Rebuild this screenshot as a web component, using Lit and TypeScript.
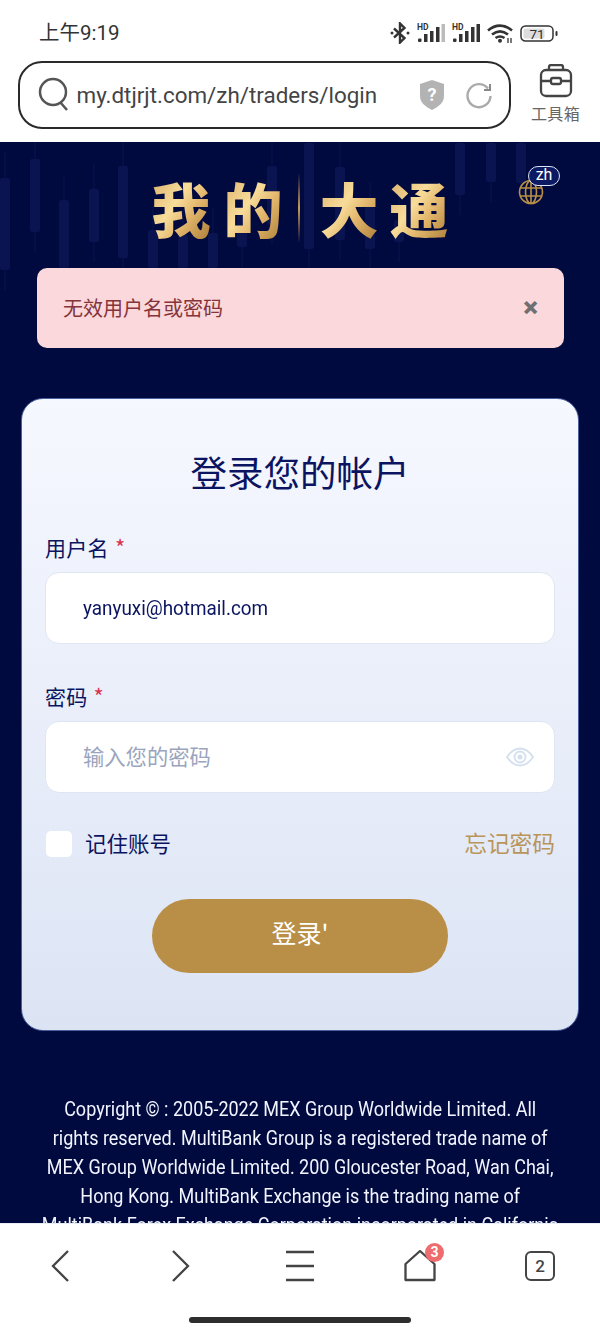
import { LitElement, html, css, svg, unsafeCSS } from "lit";
import { customElement } from "lit/decorators.js";

const CJK = unsafeCSS(`"Noto Sans CJK SC", "Noto Sans", sans-serif`);

// x centre, body top, body bottom (page coordinates of the decorative chart)
const candles: [number, number, number][] = [
  [5, 178, 270], [35, 159, 232], [64, 200, 268], [94, 189, 242], [123, 166, 258],
  [153, 230, 268], [183, 235, 268], [213, 233, 268], [242, 215, 247], [272, 166, 225],
  [309, 143, 249], [340, 167, 240], [370, 207, 249], [399, 220, 242],
  [460, 143, 195], [491, 143, 182], [521, 143, 183],
];
const TOP = 142;

@customElement("app-root")
export class AppRoot extends LitElement {
  static styles = css`
    :host { display: block; width: 600px; height: 1333px; overflow: hidden; font-family: ${CJK}; background: #fff; }
    .page { display: flex; flex-direction: column; height: 1333px; }
    .status { height: 58px; flex: none; display: flex; align-items: center; justify-content: space-between; padding: 8px 42px 0 39px; box-sizing: border-box; color: #333; }
    .time { font-size: 20.5px; font-family: Roboto, ${CJK}; line-height: 34px; }
    .status-icons { display: flex; align-items: center; gap: 7px; }
    .toolbar { height: 84px; flex: none; display: flex; padding: 3px 0 0 18px; box-sizing: border-box; }
    .pill { width: 493px; height: 68px; box-sizing: border-box; border: 2.5px solid #2a2a2a; border-radius: 24px; display: flex; align-items: center; padding: 0 17px 0 17.5px; }
    .url { font: 22.4px Roboto, sans-serif; color: #444; margin-left: 7px; flex: 1; white-space: nowrap; }
    .shield { margin-right: 21px; display: block; }
    .tool { flex: 1; display: flex; flex-direction: column; align-items: center; padding-top: 3px; }
    .tool span { font-size: 16px; color: #666; line-height: 22px; margin-top: 4px; letter-spacing: 0.3px; }
    .main { flex: 1; min-height: 0; overflow: hidden; background: #010a3e; position: relative; display: flex; flex-direction: column; }
    .candles { position: absolute; left: 0; top: 0; }
    .logo { height: 126px; flex: none; position: relative; display: flex; align-items: center; justify-content: center; }
    .logo-text { font-size: 59px; line-height: 70px; font-weight: 900; margin-top: 5px; display: flex; align-items: center; }
    .logo-text span { background: linear-gradient(125deg, #d9ae68 0%, #f8dc9a 42%, #e4b96f 62%, #a97a34 100%); -webkit-background-clip: text; background-clip: text; color: transparent; }
    .logo-text .g1 { margin-right: 13px; }
    .logo-text .g3 { margin-right: 11px; }
    .logo-sep { width: 2px; height: 70px; margin: 0 20px 0 15px; background: linear-gradient(#010a3e, #c89a58, #010a3e); }
    .globe { position: absolute; left: 518px; top: 37px; }
    .badge { position: absolute; left: 528px; top: 24px; width: 32px; height: 20px; box-sizing: border-box; border: 1.5px solid #dfe4f5; border-radius: 10px; background: #0c1a63; color: #fff; font: 16px/16px Roboto, sans-serif; text-align: center; }
    .alert { flex: none; position: relative; margin: 0 36px 0 37px; height: 80px; box-sizing: border-box; border-radius: 10px; background: #fbd8db; color: #85343a; display: flex; align-items: center; justify-content: space-between; padding: 0 26px 2px; font-size: 20px; }
    .alert b { font: 900 28px Roboto, sans-serif; color: #6f6f72; }
    .card { flex: none; position: relative; margin: 50px 21px 0; height: 633px; box-sizing: border-box; border: 1px solid #4a5f9e; border-radius: 22px; background: linear-gradient(#f6f8ff, #dce4f4); padding: 47px 23px 0; color: #0b1460; }
    .title { font-size: 36.5px; line-height: 52px; height: 53px; text-align: center; }
    label { display: block; font-size: 21px; line-height: 27px; height: 30px; margin-top: 34px; letter-spacing: 0.3px; }
    label + .input { margin-top: 9px; }
    label i { color: #d8344c; font-style: normal; font-size: 22px; margin-left: 1px; }
    .input + label { margin-top: 38px; }
    .input { height: 72px; box-sizing: border-box; background: #fff; border: 1px solid #dfe6f3; border-radius: 14px; display: flex; align-items: center; justify-content: space-between; padding: 0 20px 0 37px; font-size: 21.3px; }
    .email { display: inline-block; transform: scaleX(0.92); transform-origin: left center; font-family: Roboto, sans-serif; font-size: 20.5px; color: #0b1460; }
    .ph { color: #9aa5bd; margin-bottom: 4px; }
    .row { display: flex; align-items: center; justify-content: space-between; height: 30px; margin-top: 36px; }
    .remember { display: flex; align-items: center; gap: 13px; font-size: 21.5px; line-height: 28px; }
    .remember span:last-child { margin-top: -3px; }
    .check { width: 26px; height: 26px; background: #fff; border-radius: 5px; margin-left: 1px; }
    .forgot { font-size: 22.7px; color: #b9955a; margin-top: -3px; }
    .btn { display: block; margin: 40px auto 0; width: 296px; height: 74px; padding: 0 0 9px; border: 0; border-radius: 37px; background: #b98f47; color: #fff; font: 25px ${CJK}; }
    .copy { flex: none; position: relative; width: 667px; box-sizing: border-box; margin: 64px 0 0; padding: 0 44.6px; transform: scaleX(0.9); transform-origin: left top; text-align: center; color: #f2f4ff; font: 20px/29px Roboto, sans-serif; }
    .nav { height: 110px; flex: none; background: #fff; border-top: 1px solid #e8ecf4; box-sizing: border-box; display: flex; flex-direction: column; position: relative; }
    .nav-icons { height: 83px; display: grid; grid-template-columns: repeat(5, 120px); justify-items: center; align-items: start; padding-top: 26px; box-sizing: border-box; }
    .nav-home { position: relative; width: 32px; height: 32px; }
    .dot { position: absolute; left: 21px; top: -7px; width: 19px; height: 19px; border-radius: 50%; background: #ee6b6e; color: #fff; font: bold 14px/19px Roboto, sans-serif; text-align: center; }
    .tabs { width: 30px; height: 30px; box-sizing: border-box; border: 2px solid #444; border-radius: 6px; color: #444; font: 500 17px/26px Roboto, sans-serif; text-align: center; margin-top: 1px; }
    .handle-wrap { flex: 1; display: flex; justify-content: center; padding-top: 10px; }
    .handle { width: 222px; height: 6px; border-radius: 3px; background: #2e2e2e; }
  `;

  private signal(dimLast: boolean) {
    return html`<svg width="28" height="20" viewBox="0 0 28 20">
      <text x="0" y="7" font-family="Roboto, sans-serif" font-size="8.5" font-weight="700" fill="#333">HD</text>
      <rect x="1" y="15.500" width="3.500" height="3.500" rx="1" fill="#333"/><rect x="7" y="11" width="3.500" height="8" fill="#333"/>
      <rect x="13" y="8" width="3.500" height="11" fill="#333"/><rect x="19" y="4" width="3.500" height="15" fill="#333"/>
      <rect x="24.500" y="1" width="3.500" height="18" fill="${dimLast ? "#bbb" : "#333"}"/>
    </svg>`;
  }

  render() {
    return html`<div class="page">
      <div class="status">
        <div class="time">上午9:19</div>
        <div class="status-icons">
          <svg width="20" height="22" viewBox="0 0 20 22" fill="none" stroke="#333" stroke-width="2.400"><path d="M4 6.500l10.500 9.500-4.500 4.500V1.500L14.500 6 4 15.500"/><circle cx="2" cy="11" r="1.500" fill="#333" stroke="none"/><circle cx="18" cy="11" r="1.500" fill="#333" stroke="none"/></svg>
          ${this.signal(true)}${this.signal(false)}
          <svg width="26" height="19" viewBox="0 0 26 19" fill="none" stroke="#333" stroke-width="2.600"><path d="M1 6.500c7.500-6.500 16.500-6.500 24 0M5 10.500c5-4 11-4 16 0M8.500 14c3-2 6-2 9 0"/><circle cx="13" cy="16.800" r="2" fill="#333" stroke="none"/><path d="M21 14v5M24 14v5" stroke-width="1.300"/></svg>
          <svg width="38" height="17" viewBox="0 0 38 17"><rect x="1" y="1" width="32" height="15" rx="4.500" fill="#fff" stroke="#333" stroke-width="1.500"/><rect x="3.500" y="3.500" width="21" height="10" rx="1.500" fill="#ddd"/><text x="17" y="13.500" text-anchor="middle" font-family="Roboto, sans-serif" font-size="13.500" fill="#333">71</text><rect x="35.500" y="6" width="2" height="5" rx="1" fill="#333"/></svg>
        </div>
      </div>
      <div class="toolbar">
        <div class="pill">
          <svg width="32" height="36" viewBox="0 0 32 36" fill="none" stroke="#555" stroke-width="2.500"><circle cx="15" cy="15" r="13"/><path d="M22 25l7 8"/></svg>
          <div class="url">my.dtjrjt.com/zh/traders/login</div>
          <svg class="shield" width="26" height="30" viewBox="0 0 26 30"><path d="M13 0l12 4v12c0 7-6 11-12 14C7 27 1 23 1 16V4z" fill="#b3b3b3"/><text x="13" y="21" text-anchor="middle" font-family="Roboto, sans-serif" font-size="18" font-weight="700" fill="#fff">?</text></svg>
          <svg width="26" height="28" viewBox="0 0 26 28" fill="none" stroke="#aaa" stroke-width="2.400"><path d="M22 7.500A11.500 11.500 0 1 0 24.500 15"/><path d="M24 3v6h-6" stroke="#888" stroke-width="2"/></svg>
        </div>
        <div class="tool">
          <svg width="34" height="34" viewBox="0 0 34 34" fill="none" stroke="#444" stroke-width="2.300"><rect x="2" y="6" width="30" height="26" rx="5"/><path d="M10 6V3a2 2 0 0 1 2-2h10a2 2 0 0 1 2 2v3M2 17h10M22 17h10"/><rect x="12" y="14" width="10" height="6" rx="2"/></svg>
          <span>工具箱</span>
        </div>
      </div>
      <div class="main">
        <svg class="candles" width="600" height="320" viewBox="0 0 600 320">
          ${candles.map(([x, t, b]) => svg`<line x1="${x}" x2="${x}" y1="${Math.max(0, t - TOP - 25)}" y2="${b - TOP + 20}" stroke="#081250" stroke-width="1"/><rect x="${x - 5}" y="${t - TOP}" width="10" height="${b - t}" rx="2" fill="#0a1450"/>`)}
        </svg>
        <div class="logo">
          <div class="logo-text"><span class="g1">我</span><span>的</span><i class="logo-sep"></i><span class="g3">大</span><span>通</span></div>
          <svg class="globe" width="26" height="26" viewBox="0 0 26 26" fill="none" stroke="#b98f47" stroke-width="1.600"><circle cx="13" cy="13" r="11.500"/><ellipse cx="13" cy="13" rx="5.500" ry="11.500"/><path d="M13 1.500v23M2 9h22M2 17h22"/></svg>
          <div class="badge">zh</div>
        </div>
        <div class="alert"><span>无效用户名或密码</span><b>×</b></div>
        <div class="card">
          <div class="title">登录您的帐户</div>
          <label>用户名 <i>*</i></label>
          <div class="input"><span class="email">yanyuxi@hotmail.com</span></div>
          <label>密码 <i>*</i></label>
          <div class="input"><span class="ph">输入您的密码</span>
            <svg width="28" height="20" viewBox="0 0 28 20" fill="none" stroke="#d5e0ee" stroke-width="1.800"><path d="M1 10C5 4 9 1.500 14 1.500S23 4 27 10c-4 6-8 8.500-13 8.500S5 16 1 10z"/><circle cx="14" cy="10" r="5.500"/><circle cx="14" cy="10" r="2.500" fill="#d5e0ee" stroke="none"/></svg>
          </div>
          <div class="row">
            <div class="remember"><span class="check"></span><span>记住账号</span></div>
            <div class="forgot">忘记密码</div>
          </div>
          <button class="btn">登录'</button>
        </div>
        <div class="copy">Copyright © : 2005-2022 MEX Group Worldwide Limited. All rights reserved. MultiBank Group is a registered trade name of MEX Group Worldwide Limited. 200 Gloucester Road, Wan Chai, Hong Kong. MultiBank Exchange is the trading name of MultiBank Forex Exchange Corporation incorporated in California</div>
      </div>
      <div class="nav">
        <div class="nav-icons">
          <svg width="20" height="32" viewBox="0 0 20 32" fill="none" stroke="#444" stroke-width="2.300"><path d="M18 1L3 16l15 15"/></svg>
          <svg width="20" height="32" viewBox="0 0 20 32" fill="none" stroke="#444" stroke-width="2.300"><path d="M3 1l15 15L3 31"/></svg>
          <svg width="30" height="32" viewBox="0 0 30 32" fill="none" stroke="#444" stroke-width="2.300"><path d="M1 2h28M1 16h28M1 30h28"/></svg>
          <div class="nav-home">
            <svg width="32" height="32" viewBox="0 0 32 32" fill="none" stroke="#444" stroke-width="2.300" stroke-linejoin="round"><path d="M1.500 30V14L16 1l14.500 13v16z"/></svg>
            <div class="dot">3</div>
          </div>
          <div class="tabs">2</div>
        </div>
        <div class="handle-wrap"><div class="handle"></div></div>
      </div>
    </div>`;
  }
}
